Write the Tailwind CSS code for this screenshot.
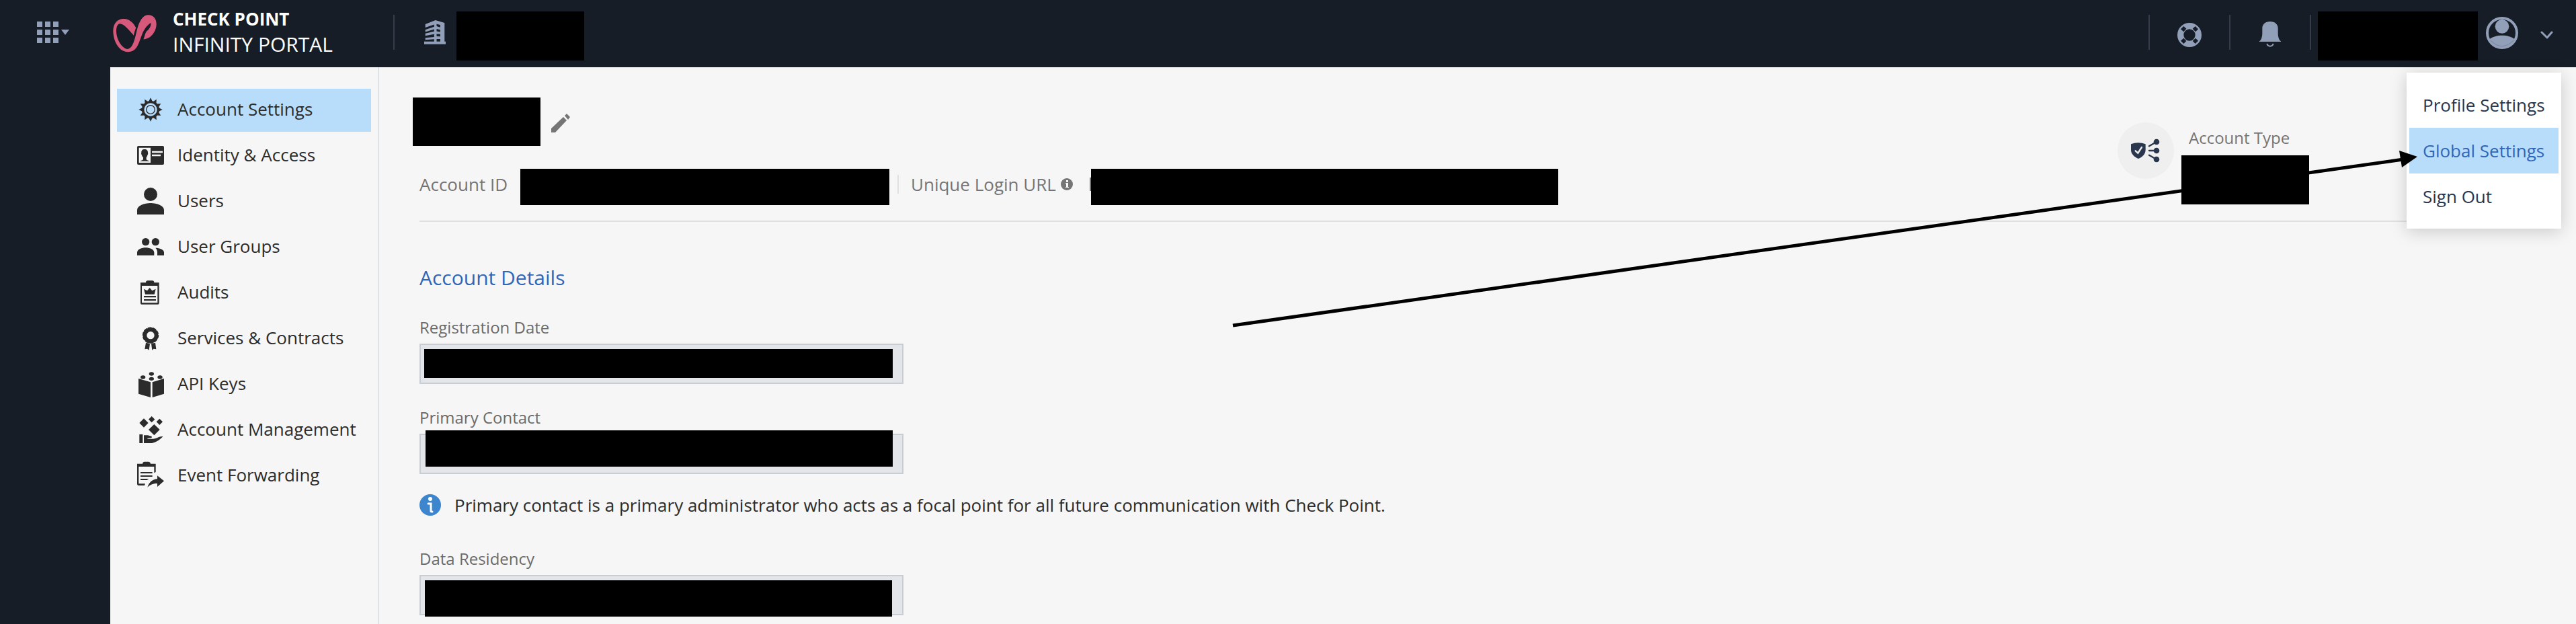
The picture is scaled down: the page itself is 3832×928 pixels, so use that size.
<!DOCTYPE html>
<html lang="en">
<head>
<meta charset="utf-8">
<title>Infinity Portal - Account Settings</title>
<script src="https://cdn.jsdelivr.net/npm/@tailwindcss/browser@4"></script>
</head>
<body class="relative flex min-h-screen flex-col overflow-x-hidden bg-[#171d27] font-['Open_Sans','Noto_Sans',sans-serif] text-[26px] leading-10 text-[#2b2b2b]">

<header class="flex h-[100px] shrink-0 items-center text-[#929fb8]">
  <button type="button" aria-label="Open apps" class="ml-[55px] mb-1 shrink-0">
    <svg class="h-8 w-12" viewBox="0 0 48 32" fill="currentColor"><path d="M0 0h8v8H0zM12 0h8v8h-8zM24 0h8v8h-8zM0 12h8v8H0zM12 12h8v8h-8zM24 12h8v8h-8zM0 24h8v8H0zM12 24h8v8h-8zM24 24h8v8h-8zM36 12h12l-6 8z"/></svg>
  </button>
  <a href="#" class="ml-[65px] flex shrink-0 items-center gap-6">
    <svg class="h-14 w-[65px]" viewBox="55 62 195 168" fill="#d6587b"><path d="M158 120C145 95 125 79 103 80C75 80 56 100 56 135C57 185 85 228 122 228C165 226 170 185 183 155C192 130 205 110 224 98C227 113 215 128 204 137C197 147 197 160 191 171C225 170 249 135 249 103C249 80 235 63 213 63C190 63 178 85 168 110C155 150 150 212 120 215C95 213 70 170 70 135C70 115 77 102 86 102C105 102 130 135 148 154C150 142 154 130 158 120z"/></svg>
    <span class="flex w-[248px] flex-col pb-1 whitespace-nowrap text-white">
      <span class="text-[26px] leading-9 font-bold">CHECK POINT</span>
      <span class="text-[30px] leading-10">INFINITY PORTAL</span>
    </span>
  </a>
  <div class="ml-20 mb-1 flex items-center gap-11">
    <span class="h-[52px] w-[2px] bg-[#353d4d]"></span>
    <svg class="h-9 w-8" viewBox="0 0 95 107" fill="currentColor"><path fill-rule="evenodd" d="M50 0L90 12V94H95V106H0V94H44V84L5 87V78L44 74V62L5 69V59L44 50V40L5 52V42L44 29V19L5 33V18zM55 17V27L71 32V21zM55 39V49L71 52V42zM55 61V71L71 72V62zM55 83V94L71 94V83z"/></svg>
  </div>
  <span class="ml-4 mt-[7px] h-[73px] w-[190px] bg-black"></span>

  <div class="ml-auto flex h-full items-center">
    <span class="mb-1 h-[52px] w-[2px] bg-[#353d4d]"></span>
    <button type="button" aria-label="Help" class="flex w-[118px] justify-center pt-1">
      <svg class="h-9 w-9" viewBox="0 0 108 108"><circle cx="54" cy="54" r="40" fill="none" stroke="#929fb8" stroke-width="28"/><g fill="#171d27"><path d="M28 15l12 11-12 14-13-12zM80 15l13 13-12 12-13-14zM28 68l12 13-12 12-13-13zM81 68l12 12-13 13-12-12z"/></g></svg>
    </button>
    <span class="mb-1 h-[52px] w-[2px] bg-[#353d4d]"></span>
    <button type="button" aria-label="Notifications" class="flex w-[118px] justify-center pt-[2px]">
      <svg class="h-[38px] w-8" viewBox="0 0 96 114"><path fill="#929fb8" d="M48 0C27 0 13 12 13 30V50C13 68 9 82 0 88V90H96V88C87 82 83 68 83 50V30C83 12 69 0 48 0z"/><path d="M34 99c2 7 8 11 14 11s12-4 14-11" fill="none" stroke="#929fb8" stroke-width="6"/></svg>
    </button>
    <span class="mb-1 h-[52px] w-[2px] bg-[#353d4d]"></span>
    <span class="ml-[10px] mt-[7px] h-[73px] w-[238px] bg-black"></span>
    <button type="button" aria-label="User menu" aria-expanded="true" class="ml-3 mr-[34px] flex items-center gap-8">
      <svg class="mb-[2px] h-12 w-12" viewBox="0 0 144 144"><circle cx="72" cy="72" r="66" fill="none" stroke="#929fb8" stroke-width="12"/><circle cx="72" cy="43" r="31" fill="#929fb8"/><path d="M16 100C28 89 50 83 72 83s44 6 56 17C120 124 98 136 72 136S24 124 16 100z" fill="#929fb8"/><path d="M20 104Q46 131 72 131T124 104" fill="none" stroke="#68758d" stroke-width="2"/></svg>
      <svg class="h-5 w-5" viewBox="0 0 20 20" fill="none" stroke="currentColor" stroke-width="3" stroke-linecap="round" stroke-linejoin="round"><path d="M3 8l8 8 7-8"/></svg>
    </button>
  </div>
</header>

<div class="ml-[164px] flex flex-1 bg-[#f6f6f6]">
  <nav aria-label="Settings" class="flex w-[400px] shrink-0 flex-col gap-1 border-r-2 border-[#dde2e8] pr-[10px] pl-[10px] pt-8">
    <a href="#" aria-current="page" class="flex h-16 items-center gap-5 bg-[#b7ddfb] pl-[30px]">
      <svg class="h-10 w-10 shrink-0 overflow-visible" viewBox="0 0 120 120" fill="#2b2b2b"><defs><path id="tooth" d="M60 4l3 6 6 12H51l6-12z"/></defs><circle cx="60" cy="57" r="34" fill="none" stroke="#2b2b2b" stroke-width="10"/><circle cx="60" cy="57" r="19" fill="none" stroke="#2b2b2b" stroke-width="4"/><use href="#tooth"/><use href="#tooth" transform="rotate(30 60 57)"/><use href="#tooth" transform="rotate(60 60 57)"/><use href="#tooth" transform="rotate(90 60 57)"/><use href="#tooth" transform="rotate(120 60 57)"/><use href="#tooth" transform="rotate(150 60 57)"/><use href="#tooth" transform="rotate(180 60 57)"/><use href="#tooth" transform="rotate(210 60 57)"/><use href="#tooth" transform="rotate(240 60 57)"/><use href="#tooth" transform="rotate(270 60 57)"/><use href="#tooth" transform="rotate(300 60 57)"/><use href="#tooth" transform="rotate(330 60 57)"/></svg>
      <span class="pb-1 whitespace-nowrap">Account Settings</span>
    </a>
    <a href="#" class="flex h-16 items-center gap-5 pl-[30px]">
      <svg class="h-10 w-10 shrink-0 overflow-visible" viewBox="0 0 120 120" fill="#2b2b2b"><rect y="15" width="120" height="84" rx="6"/><path fill="#f6f6f6" d="M8 23h52v67H8zM66 38h48v8H66zM66 53h39v8H66z"/><path d="M33 30C23 30 18 36 19 46C17 48 19 54 21 56C22 61 25 64 27 66V74C27 78 16 80 12 83H56C52 80 41 78 41 74V66C43 64 45 60 46 56C48 54 50 48 48 46C49 36 43 30 33 30z"/></svg>
      <span class="pb-1 whitespace-nowrap">Identity &amp; Access</span>
    </a>
    <a href="#" class="flex h-16 items-center gap-5 pl-[30px]">
      <svg class="h-10 w-10 shrink-0 overflow-visible" viewBox="0 3 120 120" fill="#2b2b2b"><circle cx="60" cy="30" r="30"/><path d="M0 120v-20C0 80 32 69 60 69s60 11 60 31v20z"/></svg>
      <span class="pb-1 whitespace-nowrap">Users</span>
    </a>
    <a href="#" class="flex h-16 items-center gap-5 pl-[30px]">
      <svg class="h-10 w-10 shrink-0 overflow-visible" viewBox="0 0 120 120" fill="#2b2b2b"><circle cx="38" cy="35" r="17"/><circle cx="82" cy="35" r="17"/><path d="M0 95V83C0 68 22 61 38 61s38 7 38 22v12zM90 95V82c0-9-3-15-8-20 18 0 38 7 38 20v13z"/></svg>
      <span class="pb-1 whitespace-nowrap">User Groups</span>
    </a>
    <a href="#" class="flex h-16 items-center gap-5 pl-[30px]">
      <svg class="h-10 w-10 shrink-0 overflow-visible" viewBox="0 0 120 120" fill="#2b2b2b"><path fill-rule="evenodd" d="M15 13H39C39 6 42 4 47 4H68C73 4 76 6 76 13H98V104Q98 110 93 110H20Q15 110 15 104zM21 27V103H91V27z"/><path d="M36 65L30 41L45 49L56 36L67 49L83 41L77 65zM30 72h54v7H30zM30 87h54v7H30z"/></svg>
      <span class="pb-1 whitespace-nowrap">Audits</span>
    </a>
    <a href="#" class="flex h-16 items-center gap-5 pl-[30px]">
      <svg class="h-10 w-10 shrink-0 overflow-visible" viewBox="0 0 120 120" fill="#2b2b2b"><circle cx="60" cy="44" r="25" fill="none" stroke="#2b2b2b" stroke-width="16"/><circle cx="60" cy="44" r="32" fill="none" stroke="#2b2b2b" stroke-width="9" stroke-linecap="round" stroke-dasharray="11 9.1"/><path d="M39 77L57 81L53 110L45 104L34 106zM81 77L63 81L67 110L74 104L85 106z"/></svg>
      <span class="pb-1 whitespace-nowrap">Services &amp; Contracts</span>
    </a>
    <a href="#" class="flex h-16 items-center gap-5 pl-[30px]">
      <svg class="h-10 w-10 shrink-0 overflow-visible" viewBox="0 0 120 120" fill="#2b2b2b"><ellipse cx="64" cy="12" rx="11" ry="8"/><ellipse cx="26" cy="27" rx="11" ry="8"/><ellipse cx="64" cy="34" rx="11" ry="8"/><ellipse cx="102" cy="27" rx="11" ry="8"/><path d="M6 33L60 49V117L6 101zM68 49L120 33V101L68 117z"/></svg>
      <span class="pb-1 whitespace-nowrap">API Keys</span>
    </a>
    <a href="#" class="flex h-16 items-center gap-5 pl-[30px]">
      <svg class="h-10 w-10 shrink-0 overflow-visible" viewBox="0 0 120 120" fill="#2b2b2b"><path d="M30 7l20 20-20 20-20-20zM65-3l14 14-14 14-14-14zM100 8l14 14-14 14-14-14zM76 33l25 24-25 25-25-25zM10 78h15v39H10z"/><path d="M30 82H46C53 82 56 86 62 86C68 87 66 94 60 94L46 95V98H70C88 97 98 86 115 87C106 98 90 112 66 117H30z"/></svg>
      <span class="pb-1 whitespace-nowrap">Account Management</span>
    </a>
    <a href="#" class="flex h-16 items-center gap-5 pl-[30px]">
      <svg class="h-10 w-10 shrink-0 overflow-visible" viewBox="0 0 120 120" fill="#2b2b2b"><path d="M0 5H24C25-1 28-4 33-4H50C56-4 59-1 60 5H83V42L76 46V18H7V94H36L33 102H7Q0 102 0 95zM15 42h53v6H15zM15 57h53v6H15zM15 72h37l-8 6H15z"/><path d="M120 82L90 108V93C72 93 60 97 46 110C54 86 70 74 90 73V58z"/></svg>
      <span class="pb-1 whitespace-nowrap">Event Forwarding</span>
    </a>
  </nav>

  <main class="min-w-0 flex-1 pr-10 pb-3 pl-[60px] pt-[45px]">
    <section class="flex items-start justify-between border-b-2 border-[#e0e0e0] pb-[23px] text-[#757575]">
      <div>
        <div class="-ml-[10px] flex items-center gap-4">
          <span class="h-[72px] w-[190px] bg-black"></span>
          <button type="button" aria-label="Edit account name" class="pt-1">
            <svg class="h-7 w-7" viewBox="0 0 28 28" fill="#757575"><path d="M0 22L18 5l5 5L6 28H0zM20 3l3-3 5 5-3 4z"/></svg>
          </button>
        </div>
        <div class="mt-[34px] flex items-start">
          <span class="flex h-[46px] w-[150px] items-center whitespace-nowrap">Account ID</span>
          <span class="h-[54px] w-[549px] bg-black"></span>
          <span class="mt-[9px] ml-3 h-7 w-[2px] bg-[#e0e0e0]"></span>
          <span class="ml-[18px] flex h-[46px] w-[268px] items-center gap-[6px] whitespace-nowrap">Unique Login URL
            <svg class="h-5 w-5" viewBox="0 0 20 20"><circle cx="10" cy="10" r="9" fill="#757575"/><path fill="#f6f6f6" d="M9 4h3v3H9zM8 8h4v6h1v1H8v-1h1V9H8z"/></svg>
            <span class="ml-auto h-5 w-[2px] bg-[#757575]"></span>
          </span>
          <span class="h-[54px] w-[695px] bg-black"></span>
        </div>
      </div>
      <div class="mt-[37px] mr-[357px] flex items-start">
        <svg class="h-[84px] w-[84px]" viewBox="0 0 252 252" fill="#29364d"><circle cx="126" cy="126" r="126" fill="#efefef"/><path d="M60 97Q92 84 125 97V122C125 140 112 154 93 162C73 153 60 140 60 122z"/><path d="M80 127l11 10 17-26" fill="none" stroke="#efefef" stroke-width="7" stroke-linecap="round"/><circle cx="174" cy="87" r="13"/><circle cx="174" cy="126" r="13"/><circle cx="174" cy="165" r="13"/><path d="M141 106l33-19M141 126h33M141 146l33 19" stroke="#29364d" stroke-width="7" stroke-linecap="round"/></svg>
        <div class="ml-[11px] pt-[7px]">
          <p class="pl-[11px] text-[24px] leading-8">Account Type</p>
          <span class="mt-[10px] block h-[73px] w-[190px] bg-black"></span>
        </div>
      </div>
    </section>

    <form>
      <h2 class="mt-[63px] text-[30px] leading-10 text-[#3066b8]">Account Details</h2>

      <label for="registration" class="mt-[38px] block text-[24px] leading-8 text-[#6b6b6b]">Registration Date</label>
      <div class="relative mt-2 w-[720px]">
        <input id="registration" type="text" disabled class="block h-[60px] w-full border-2 border-[#c8cdd3] bg-[#e3e5e8]">
        <span class="absolute left-[7px] top-2 h-[43px] w-[697px] bg-black"></span>
      </div>

      <label for="contact" class="mt-[34px] block text-[24px] leading-8 text-[#6b6b6b]">Primary Contact</label>
      <div class="relative mt-2 w-[720px]">
        <input id="contact" type="text" disabled class="block h-[60px] w-full border-2 border-[#c8cdd3] bg-[#e3e5e8]">
        <span class="absolute left-[9px] -top-[5px] h-[54px] w-[695px] bg-black"></span>
      </div>

      <p class="mt-[26px] flex items-center gap-5">
        <svg class="h-8 w-8 shrink-0" viewBox="0 0 32 32"><circle cx="16" cy="16" r="16" fill="#3d85cd"/><circle cx="16" cy="7" r="3" fill="#fff"/><path d="M13 14h4v11q0 1 2 1" fill="none" stroke="#fff" stroke-width="3" stroke-linecap="round"/></svg>
        Primary contact is a primary administrator who acts as a focal point for all future communication with Check Point.
      </p>

      <label for="residency" class="mt-[44px] block text-[24px] leading-8 text-[#6b6b6b]">Data Residency</label>
      <div class="relative mt-2 w-[720px]">
        <input id="residency" type="text" disabled class="block h-[60px] w-full border-2 border-[#c8cdd3] bg-[#e3e5e8]">
        <span class="absolute left-2 top-2 h-[54px] w-[695px] bg-black"></span>
      </div>
    </form>
  </main>
</div>

<!-- User menu -->
<div role="menu" class="absolute top-[108px] right-[22px] flex w-[230px] flex-col bg-white px-1 py-[14px] text-[#29364d] shadow-[0_4px_24px_rgba(0,0,0,0.18)]">
  <a role="menuitem" href="#" class="flex h-[68px] items-center pl-5 whitespace-nowrap">Profile Settings</a>
  <a role="menuitem" href="#" class="flex h-[68px] items-center bg-[#b7ddfb] pl-5 whitespace-nowrap text-[#3066b8]">Global Settings</a>
  <a role="menuitem" href="#" class="flex h-[68px] items-center pl-5 whitespace-nowrap">Sign Out</a>
</div>

<!-- Arrow pointing at Global Settings -->
<svg class="pointer-events-none absolute top-[224px] right-[236px] h-[264px] w-[1765px]" viewBox="0 0 1765 264" aria-hidden="true"><path d="M3 260L1744 13" stroke="#000" stroke-width="5"/><path d="M1738 0L1765 9L1742 25z"/></svg>
</body>
</html>
